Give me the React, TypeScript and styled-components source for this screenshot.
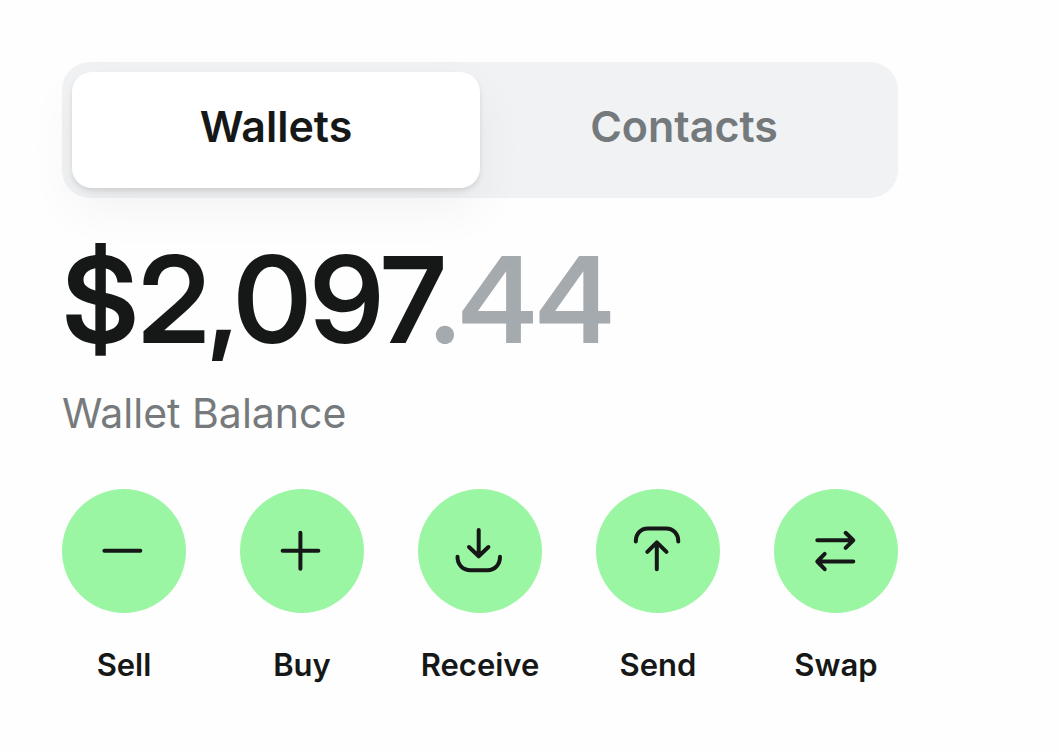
import React, { useState } from "react";
import styled, { createGlobalStyle } from "styled-components";

const GlobalStyle = createGlobalStyle`
  * { box-sizing: border-box; }
  body {
    margin: 0;
    background: #fefefe;
    color: #161818;
    font-family: Inter, "Liberation Sans", sans-serif;
    -webkit-font-smoothing: antialiased;
  }
  button { font-family: inherit; color: inherit; border: 0; cursor: pointer; }
`;

const Page = styled.main`
  padding: 62px 161px 62px 62px;
`;

const Tabs = styled.div`
  display: flex;
  padding: 10px;
  border-radius: 28px;
  background: #f0f2f4;
`;

const Tab = styled.button<{ $active: boolean }>`
  flex: 1;
  padding: 28px 16px 36px;
  border-radius: 20px;
  background: ${(p) => (p.$active ? "#ffffff" : "transparent")};
  box-shadow: ${(p) =>
    p.$active
      ? "0 3px 5px rgba(0, 0, 0, 0.1), 0 20px 50px rgba(0, 0, 0, 0.05)"
      : "none"};
  && { color: ${(p) => (p.$active ? "#161818" : "#74797c")}; }
  font-size: 43px;
  font-weight: 600;
  line-height: 52px;
`;

const Balance = styled.h1`
  margin: 30px 0 0;
  font-family: "Inter Display", Inter, "Liberation Sans", sans-serif;
  font-size: 120px;
  line-height: 144px;
  font-weight: 600;
  white-space: nowrap;
`;

const Cents = styled.span`
  color: #a5aaae;
`;

const Caption = styled.p`
  margin: 17px 0 0;
  color: #777a7c;
  font-size: 41px;
  line-height: 48px;
`;

const Actions = styled.div`
  display: flex;
  justify-content: space-between;
  margin-top: 52px;
`;

const Action = styled.button`
  display: flex;
  flex-direction: column;
  align-items: center;
  gap: 34px;
  width: 124px;
  padding: 0;
  background: none;
`;

const Circle = styled.span`
  display: grid;
  place-items: center;
  width: 124px;
  height: 124px;
  border-radius: 50%;
  background: #9bf6a3;
`;

const Label = styled.span`
  font-size: 31px;
  line-height: 36px;
  font-weight: 600;
`;

const Icon = styled.svg`
  width: 64px;
  height: 64px;
  fill: none;
  stroke: #161818;
  stroke-width: 4;
  stroke-linecap: round;
  stroke-linejoin: round;
`;

const actions = [
  { label: "Sell", path: "M12.4 31.8H48.3" },
  { label: "Buy", path: "M12.6 31.8H48.4M30.4 13.8V49.8" },
  {
    label: "Receive",
    path: "M30.7 10.9V37M21 28L30.7 37.3L40.4 28M9.5 37.8C9.5 45.6 14.5 51.2 22.5 51.2H39.5C47 51.2 52 45.6 52 37.8",
  },
  {
    label: "Send",
    path: "M30.8 50.3V23.5M21.3 32.9L30.8 23.3L40.5 32.9M9.8 22.6C9.8 14.8 14.5 9.5 22 9.5H40C47.4 9.5 52.3 14.8 52.3 22.6",
  },
  {
    label: "Swap",
    path: "M13.3 21.3H49M41.6 13.8L49.3 21.3L41.6 28.9M49.3 42.5H13.6M20.7 34.9L13.3 42.5L20.7 50.2",
  },
];

const tabs = ["Wallets", "Contacts"];

export default function App() {
  const [active, setActive] = useState("Wallets");
  return (
    <>
      <GlobalStyle />
      <Page>
        <Tabs role="tablist">
          {tabs.map((name) => (
            <Tab
              key={name}
              type="button"
              role="tab"
              aria-selected={active === name}
              $active={active === name}
              onClick={() => setActive(name)}
            >
              {name}
            </Tab>
          ))}
        </Tabs>
        <Balance>
          $2,097<Cents>.44</Cents>
        </Balance>
        <Caption>Wallet Balance</Caption>
        <Actions>
          {actions.map(({ label, path }) => (
            <Action key={label} type="button">
              <Circle>
                <Icon viewBox="0 0 64 64" aria-hidden="true">
                  <path d={path} />
                </Icon>
              </Circle>
              <Label>{label}</Label>
            </Action>
          ))}
        </Actions>
      </Page>
    </>
  );
}
